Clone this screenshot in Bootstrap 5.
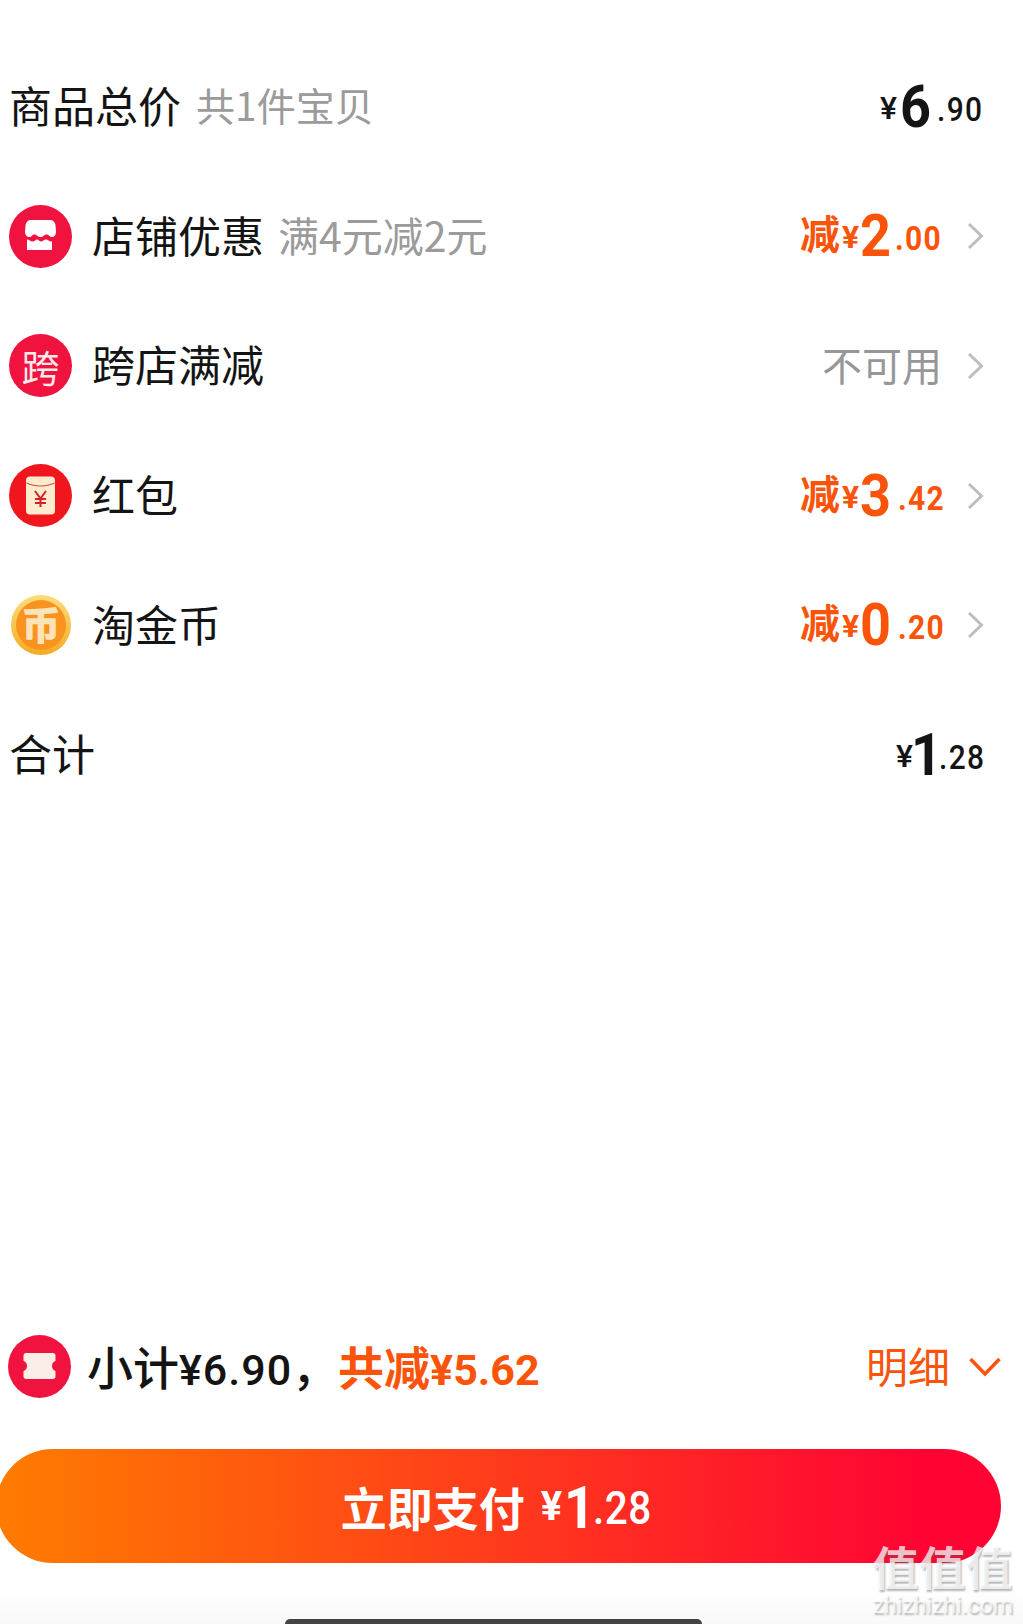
<!DOCTYPE html>
<html lang="zh-CN">
<head>
<meta charset="UTF-8">
<meta name="viewport" content="width=device-width,initial-scale=1">
<title>订单优惠明细</title>
<link rel="stylesheet" href="https://cdn.jsdelivr.net/npm/bootstrap@5.3.3/dist/css/bootstrap.min.css">
<style>
    html, body { background: #fff; }
    body { font-family: "Noto Sans CJK SC", "Noto Sans", sans-serif; color: #141414; overflow: hidden; }
    .screen { height: 1624px; width: 1023px; overflow: hidden; background: linear-gradient(#fff 1590px, #f8f8f8 1624px); }
    .fee-list { padding: 42px 39px 0 9px; }
    .fee-row { height: 129.6px; }
    .fee-icon { width: 63px; height: 63px; margin-right: 20px; flex: none; display: block; }
    .fee-badge { width: 63px; height: 63px; margin-right: 20px; flex: none; background: #f0123f; color: #fde8ec; font-size: 38px; line-height: 1; }
    .fee-name { font-size: 43px; line-height: 1; margin-top: -4px; }
    .fee-note { font-size: 41px; line-height: 1; color: #9b9b9b; margin: -4px 0 0 14px; }
    .note-short { font-size: 39px; margin-left: 15px; }
    .fee-off { font-size: 40px; line-height: 1; color: #979797; margin: -4px 0 0 0; }
    .amount { font-family: Roboto, "Noto Sans CJK SC", sans-serif; line-height: 1; }
    .amount-cut { color: #f9540a; }
    .amount-cut .amt-big, .amount-cut .amt-cents, .amount-cut .amt-cur { font-weight: 700; }
    .amount-cut .amt-cur { margin-right: 0; }
    .amt-word { font-family: "Noto Sans CJK SC", sans-serif; font-size: 40px; font-weight: 700; margin-right: 2px; margin-top: -8px; }
    .amt-cur { font-size: 32px; font-weight: 500; margin: 2px 2px 0 0; }
    .amt-big { font-size: 60px; font-weight: 700; letter-spacing: -1px; margin: 0 1px 0 1px; display: inline-block; transform: scaleX(.9); transform-origin: left center; }
    .amt-one { margin-left: -4px; margin-right: -5px; }
    .amt-cents { font-size: 34px; font-weight: 500; letter-spacing: 1.5px; margin: 4px -6px 0 0; display: inline-block; transform: scaleX(.88); transform-origin: left center; }
    .cents-gap { margin-left: 3px; }
    .cents-total { margin-right: -8px; }
    .amt-wide { margin-left: 3px; margin-right: -9px; }
    .arrow { width: 17px; height: 28px; margin-left: 25px; flex: none; display: block; }
    .foot-bar { margin-top: auto; padding: 0 22px 0 8px; height: 63px; }
    .sum-text { font-size: 46px; font-weight: 500; line-height: 1; margin-left: -4px; }
    .sum-text .amount { font-size: 43px; letter-spacing: 1px; font-weight: 500; }
    .sum-cut { color: #f9540a; font-weight: 700; }
    .sum-text .sum-cut .amount { font-weight: 700; letter-spacing: 0; }
    .detail-link { font-size: 42px; line-height: 1; color: #f9540a; margin-top: -4px; }
    .detail-arrow { width: 32px; height: 20px; margin-left: 19px; display: block; }
    .pay-btn { margin: 51px 22px 0 -4px; height: 114px; width: 1005px; border: 0; border-radius: 57px; background: linear-gradient(90deg, #ff7c00, #ff0433 92%); color: #fff; padding: 0 5px 0 0; }
    .pay-label { font-size: 46px; font-weight: 700; line-height: 1; margin-right: 16px; }
    .pay-btn .amt-cur { font-size: 40px; font-weight: 700; }
    .pay-btn .amt-big { font-size: 60px; font-weight: 700; margin-top: 3px; margin-left: 0; }
    .pay-btn .amt-cents { font-size: 46px; font-weight: 500; letter-spacing: .5px; margin: 3px -8px 0 0; }
    .home-bar { width: 417px; height: 5px; margin: 56px auto 0 285px; background: #444; border-radius: 5px 5px 0 0; }
    .mark-wrap { right: 9px; bottom: 7px; width: 142px; color: rgba(255,255,255,.72); text-shadow: 1px 2px 2px rgba(90,90,90,.45); pointer-events: none; }
    .mark-cn { font-size: 46px; font-weight: 700; line-height: 46px; letter-spacing: 1px; }
    .mark-en { font-family: Roboto, sans-serif; font-size: 23px; line-height: 22px; margin-top: 7px; white-space: nowrap; }
</style>
</head>
<body>
<div class="screen position-relative d-flex flex-column">
    <div class="fee-list">
        <div class="fee-row d-flex align-items-center">
            <span class="fee-name">商品总价</span>
            <span class="fee-note note-short">共1件宝贝</span>
            <div class="amount d-flex align-items-center ms-auto">
                <span class="amt-cur">¥</span><span class="amt-big">6</span><span class="amt-cents cents-gap">.90</span>
            </div>
        </div>
        <div class="fee-row d-flex align-items-center">
            <svg class="fee-icon" viewBox="0 0 63 63">
                <circle cx="31.5" cy="31.5" r="31.5" fill="#f0123f"/>
                <path d="M22 15h19c3 0 5 2 5.500 5l.5 7c0 3-2 5-4 5-2.500 0-3-2.600-5.500-2.600S34.500 32 31.500 32s-3.500-2.600-6-2.600S23 32 20 32c-2 0-4-2-4-5l.5-7c.5-3 2.500-5 5.500-5z" fill="#fff"/>
                <path d="M18 34.500c2.500 0 3 2 5.500 2s3-2 4.500-2 2.500 2 4 2 3-2 5-2 2.500 2 6 2V45H18z" fill="#fff"/>
            </svg>
            <span class="fee-name">店铺优惠</span>
            <span class="fee-note">满4元减2元</span>
            <div class="amount amount-cut d-flex align-items-center ms-auto">
                <span class="amt-word">减</span><span class="amt-cur">¥</span><span class="amt-big">2</span><span class="amt-cents">.00</span>
            </div>
            <svg class="arrow" viewBox="0 0 17 28"><path d="M2 2l12.500 12L2 26" fill="none" stroke="#bdbdbd" stroke-width="3"/></svg>
        </div>
        <div class="fee-row d-flex align-items-center">
            <div class="fee-badge rounded-circle d-flex align-items-center justify-content-center">跨</div>
            <span class="fee-name">跨店满减</span>
            <span class="fee-off ms-auto">不可用</span>
            <svg class="arrow" viewBox="0 0 17 28"><path d="M2 2l12.500 12L2 26" fill="none" stroke="#bdbdbd" stroke-width="3"/></svg>
        </div>
        <div class="fee-row d-flex align-items-center">
            <svg class="fee-icon" viewBox="0 0 63 63">
                <circle cx="31.5" cy="31.5" r="31.500" fill="#f0161e"/>
                <rect x="17" y="12.500" width="29" height="38" rx="4" fill="#fdebcd"/>
                <path d="M17.500 19c8 4 20 4 28 0" fill="none" stroke="#d8483a" stroke-width="1.200"/>
                <path d="M26 27l5.500 7.500L37 27M31.500 34.500V43M26 35h11M26 39h11" fill="none" stroke="#d5202a" stroke-width="2"/>
            </svg>
            <span class="fee-name">红包</span>
            <div class="amount amount-cut d-flex align-items-center ms-auto">
                <span class="amt-word">减</span><span class="amt-cur">¥</span><span class="amt-big">3</span><span class="amt-cents amt-wide">.42</span>
            </div>
            <svg class="arrow" viewBox="0 0 17 28"><path d="M2 2l12.500 12L2 26" fill="none" stroke="#bdbdbd" stroke-width="3"/></svg>
        </div>
        <div class="fee-row d-flex align-items-center">
            <svg class="fee-icon" viewBox="0 0 63 63">
                <defs>
                    <linearGradient id="coinRing" x1="0" y1="0" x2="0" y2="1"><stop offset="0" stop-color="#fcdc7c"/><stop offset="1" stop-color="#f5ab22"/></linearGradient>
                </defs>
                <circle cx="32" cy="31" r="30" fill="url(#coinRing)"/>
                <circle cx="32" cy="31" r="25" fill="#f7931e"/>
                <text x="32" y="45" text-anchor="middle" font-size="38" font-weight="700" fill="#fde3b8" stroke="#fde3b8" stroke-width="1.500" stroke-linejoin="round" font-family="Noto Sans CJK SC">币</text>
            </svg>
            <span class="fee-name">淘金币</span>
            <div class="amount amount-cut d-flex align-items-center ms-auto">
                <span class="amt-word">减</span><span class="amt-cur">¥</span><span class="amt-big">0</span><span class="amt-cents amt-wide">.20</span>
            </div>
            <svg class="arrow" viewBox="0 0 17 28"><path d="M2 2l12.500 12L2 26" fill="none" stroke="#bdbdbd" stroke-width="3"/></svg>
        </div>
        <div class="fee-row d-flex align-items-center">
            <span class="fee-name">合计</span>
            <div class="amount d-flex align-items-center ms-auto">
                <span class="amt-cur">¥</span><span class="amt-big amt-one">1</span><span class="amt-cents cents-total">.28</span>
            </div>
        </div>
    </div>

    <div class="foot-bar d-flex align-items-center">
        <svg class="fee-icon" viewBox="0 0 63 63">
            <circle cx="31.5" cy="31.5" r="31.500" fill="#f0123f"/>
            <path d="M18 18h27c1.500 0 2.500 1 2.500 2.500V26c-2.500.8-3.500 2.800-3.500 5s1 4.200 3.500 5v5.500c0 1.500-1 2.500-2.500 2.500H18c-1.500 0-2.500-1-2.500-2.500V36c2.500-.8 3.500-2.800 3.500-5s-1-4.200-3.500-5v-5.500c0-1.500 1-2.500 2.500-2.500z" fill="#fbeee6"/>
        </svg>
        <span class="sum-text">小计<span class="amount">¥6.90</span>，<span class="sum-cut">共减<span class="amount">¥5.62</span></span></span>
        <span class="detail-link ms-auto">明细</span>
        <svg class="detail-arrow" viewBox="0 0 32 20"><path d="M1.500 2L16 17 30.500 2" fill="none" stroke="#f9540a" stroke-width="3.500"/></svg>
    </div>

    <button type="button" class="pay-btn d-flex align-items-center justify-content-center flex-shrink-0">
        <span class="pay-label">立即支付</span>
        <span class="amount d-flex align-items-center">
            <span class="amt-cur">¥</span><span class="amt-big amt-one">1</span><span class="amt-cents">.28</span>
        </span>
    </button>
    <div class="home-bar flex-shrink-0"></div>

    <div class="mark-wrap position-absolute text-center">
        <div class="mark-cn">值值值</div>
        <div class="mark-en">zhizhizhi.com</div>
    </div>
</div>
<script src="https://cdn.jsdelivr.net/npm/bootstrap@5.3.3/dist/js/bootstrap.bundle.min.js"></script>
</body>
</html>
